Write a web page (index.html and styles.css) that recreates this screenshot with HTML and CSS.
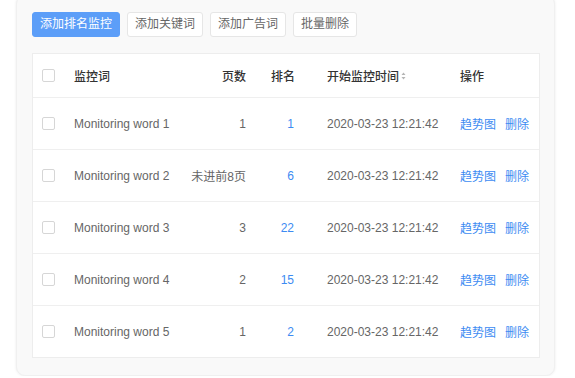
FILE: index.html
```html
<!DOCTYPE html>
<html lang="zh">
<head>
<meta charset="utf-8">
<link rel="stylesheet" href="styles.css">
</head>
<body>
<div class="panel">
  <div class="toolbar">
    <button class="btn btn-primary">添加排名监控</button>
    <button class="btn">添加关键词</button>
    <button class="btn">添加广告词</button>
    <button class="btn">批量删除</button>
  </div>
  <div class="table">
    <div class="row head">
      <div class="cell"><span class="cb"></span></div>
      <div class="cell">监控词</div>
      <div class="cell num">页数</div>
      <div class="cell num">排名</div>
      <div class="cell time">开始监控时间<svg class="sort" width="5" height="8" viewBox="0 0 5 8"><path d="M2.5 0.5 L4.5 3 L0.5 3 Z M2.5 7.5 L4.5 5 L0.5 5 Z" fill="#b5b5b5"/></svg></div>
      <div class="cell">操作</div>
    </div>
    <div class="row">
      <div class="cell"><span class="cb"></span></div>
      <div class="cell">Monitoring word 1</div>
      <div class="cell num">1</div>
      <div class="cell num rank">1</div>
      <div class="cell time">2020-03-23 12:21:42</div>
      <div class="cell ops"><a class="link">趋势图</a><a class="link">删除</a></div>
    </div>
    <div class="row">
      <div class="cell"><span class="cb"></span></div>
      <div class="cell">Monitoring word 2</div>
      <div class="cell num">未进前8页</div>
      <div class="cell num rank">6</div>
      <div class="cell time">2020-03-23 12:21:42</div>
      <div class="cell ops"><a class="link">趋势图</a><a class="link">删除</a></div>
    </div>
    <div class="row">
      <div class="cell"><span class="cb"></span></div>
      <div class="cell">Monitoring word 3</div>
      <div class="cell num">3</div>
      <div class="cell num rank">22</div>
      <div class="cell time">2020-03-23 12:21:42</div>
      <div class="cell ops"><a class="link">趋势图</a><a class="link">删除</a></div>
    </div>
    <div class="row">
      <div class="cell"><span class="cb"></span></div>
      <div class="cell">Monitoring word 4</div>
      <div class="cell num">2</div>
      <div class="cell num rank">15</div>
      <div class="cell time">2020-03-23 12:21:42</div>
      <div class="cell ops"><a class="link">趋势图</a><a class="link">删除</a></div>
    </div>
    <div class="row last">
      <div class="cell"><span class="cb"></span></div>
      <div class="cell">Monitoring word 5</div>
      <div class="cell num">1</div>
      <div class="cell num rank">2</div>
      <div class="cell time">2020-03-23 12:21:42</div>
      <div class="cell ops"><a class="link">趋势图</a><a class="link">删除</a></div>
    </div>
  </div>
</div>
</body>
</html>
```
FILE: styles.css
```css
html, body {
  margin: 0;
  padding: 0;
  background: #ffffff;
  overflow: hidden;
}
body {
  font-family: "Liberation Sans", "Noto Sans CJK SC", sans-serif;
  font-size: 12px;
  color: #666666;
}
.panel {
  margin: -5px 0 0 16px;
  width: 539px;
  height: 381px;
  box-sizing: border-box;
  background: #f9f9f9;
  border-radius: 9px;
  box-shadow: 0 0 3px rgba(0, 0, 0, 0.08);
  border: 1px solid #f0f0f0;
  padding: 16px 14px 0 15px;
}
.toolbar {
  display: flex;
  gap: 7px;
  height: 25px;
}
.btn {
  height: 25px;
  padding: 0 7px;
  border: 1px solid #e6e6e6;
  border-radius: 3px;
  background: #ffffff;
  color: #666666;
  font-family: "Liberation Sans", "Noto Sans CJK SC", sans-serif;
  font-size: 12px;
  line-height: 23px;
  margin: 0;
}
.btn-primary {
  background: #5c9ef8;
  border-color: #5c9ef8;
  color: #ffffff;
}
.table {
  margin-top: 16px;
  width: 508px;
  background: #ffffff;
  border: 1px solid #ededed;
  box-sizing: border-box;
}
.row {
  display: grid;
  grid-template-columns: 41px 122px 50px 49px 165px 1fr;
  height: 52px;
  align-items: center;
  border-bottom: 1px solid #efefef;
  box-sizing: border-box;
}
.row.head {
  height: 44px;
  color: #333333;
  font-weight: 500;
}
.row.last {
  border-bottom: none;
  height: 51px;
}
.cell {
  white-space: nowrap;
  display: flex;
  align-items: center;
}
.cell:first-child {
  padding-left: 9px;
}
.num {
  justify-content: flex-end;
}
.rank {
  color: #3d8bf2;
  padding-right: 1px;
}
.time {
  padding-left: 32px;
}
.sort {
  margin-left: 2px;
}
.cb {
  display: block;
  width: 13px;
  height: 13px;
  box-sizing: border-box;
  border: 1px solid #d6d6d6;
  border-radius: 2px;
  background: #ffffff;
}
.link {
  color: #3d8bf2;
  margin-right: 9px;
  cursor: pointer;
}
```
